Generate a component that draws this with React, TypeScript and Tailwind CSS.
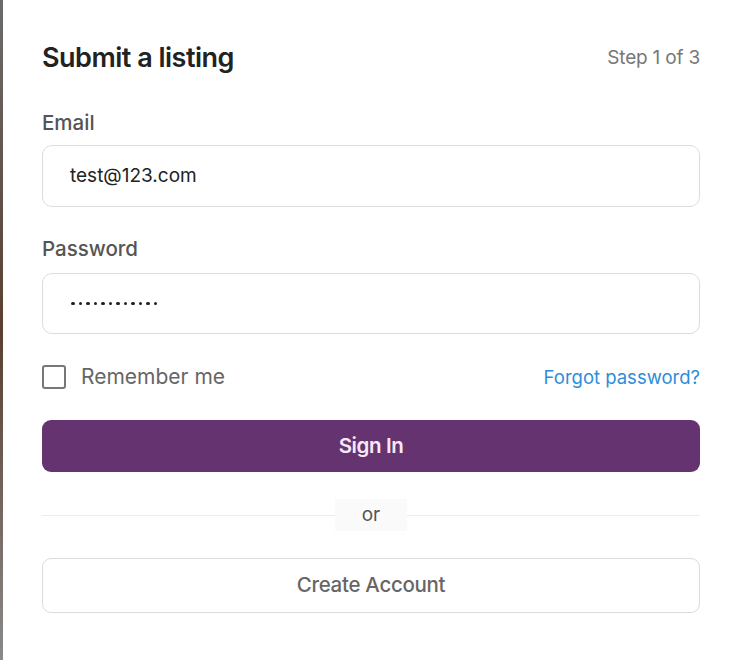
import React from "react";

export default function App() {
  const dots = Array.from({ length: 12 });
  return (
    <div className="flex min-h-[660px] w-full bg-white" style={{ fontFamily: "Inter, 'Noto Sans', sans-serif" }}>
      <div className="w-[3px] shrink-0 bg-gradient-to-b from-[#6b6b6b] via-[#5a3f30] to-[#8a8a8a]" />
      <div className="flex flex-1 flex-col pl-[39px] pr-[35px] pt-[40px]">
        <div className="flex items-center justify-between">
          <h1 className="text-[27px] font-semibold leading-[36px] tracking-[-0.5px] text-[#222]">Submit a listing</h1>
          <span className="text-[19px] leading-[36px] tracking-[-0.2px] text-[#777]">Step 1 of 3</span>
        </div>
        <label className="mt-[33px] text-[20.5px] font-medium leading-[28px] text-[#555]">Email</label>
        <div className="mt-[8px] flex h-[62px] items-center rounded-[10px] border border-[#dcdcdc] px-[27px] text-[19px] text-[#222]">
          test@123.com
        </div>
        <label className="mt-[28px] text-[20.5px] font-medium leading-[28px] text-[#555]">Password</label>
        <div className="mt-[10px] flex h-[61px] items-center gap-[4px] rounded-[10px] border border-[#dcdcdc] px-[28px]">
          {dots.map((_, i) => (
            <span key={i} className="h-[3.5px] w-[3.5px] rounded-full bg-[#222]" />
          ))}
        </div>
        <div className="mt-[29px] flex items-center justify-between">
          <div className="flex items-center gap-[15px]">
            <span className="h-[24px] w-[24px] rounded-[3px] border-2 border-[#777]" />
            <span className="text-[21px] leading-[28px] text-[#666]">Remember me</span>
          </div>
          <span className="text-[18.5px] leading-[28px] text-[#2d8ddd]">Forgot password?</span>
        </div>
        <button className="mt-[29px] flex h-[52px] items-center justify-center rounded-[9px] bg-[#663371] text-[20.5px] font-semibold tracking-[-0.4px] text-[#f6e9f6]">
          Sign In
        </button>
        <div className="relative mt-[27px] flex h-[32px] items-center justify-center">
          <div className="absolute left-0 right-0 top-1/2 h-px bg-[#ececec]" />
          <span className="relative flex h-[32px] w-[72px] items-center justify-center bg-[#fafafa] text-[19px] text-[#555]">or</span>
        </div>
        <button className="mt-[27px] flex h-[55px] items-center justify-center rounded-[9px] border border-[#dcdcdc] bg-white text-[20.5px] font-medium tracking-[-0.3px] text-[#666]">
          Create Account
        </button>
      </div>
    </div>
  );
}
